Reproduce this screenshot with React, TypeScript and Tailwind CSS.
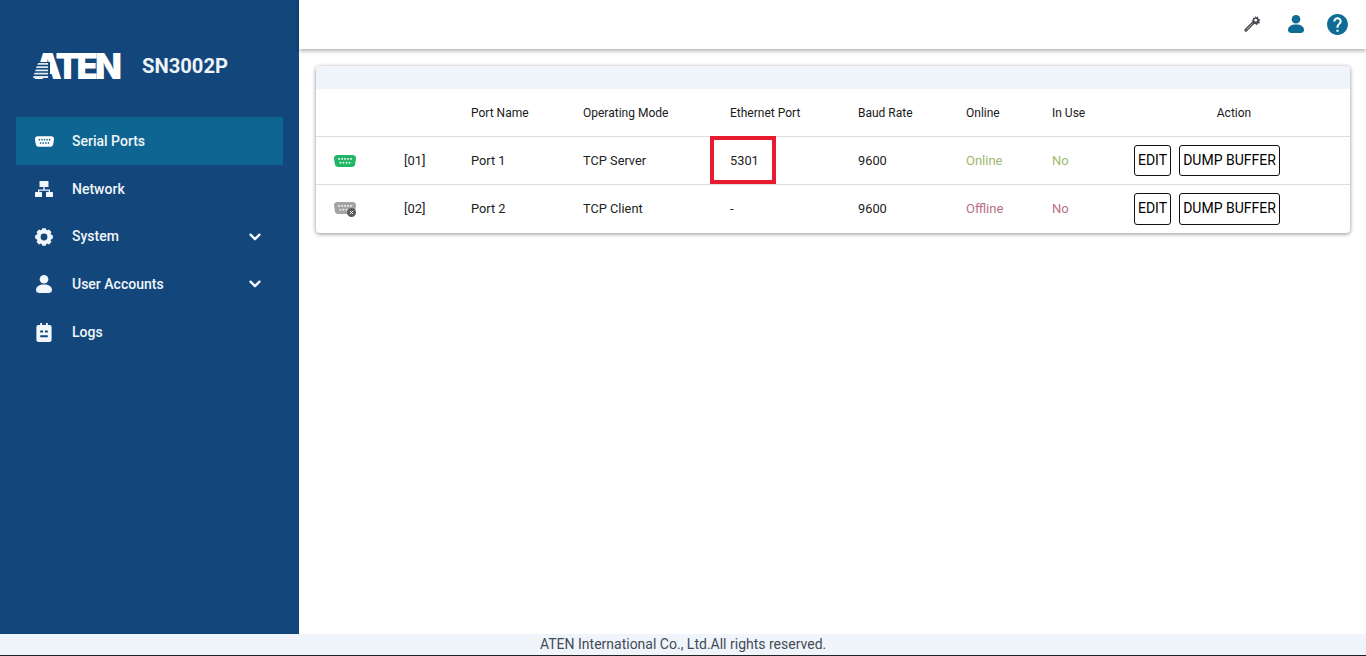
import React from "react";
import { MdHelp } from "react-icons/md";

function SerialIcon({ body, dot, className }: { body: string; dot: string; className?: string }) {
  const top = [5.500, 8.800, 12, 15.200, 18.500];
  const bottom = [7, 10.300, 13.700, 17];
  return (
    <svg viewBox="0 0 24 13" className={className}>
      <path d="M3.500 0h17C22.600 0 24 1.500 24 3.300c0 .4 0 .8-.1 1.200l-.9 5.500c-.3 1.800-1.700 3-3.400 3H4.400c-1.700 0-3.100-1.200-3.400-3L.1 4.500C0 4.100 0 3.700 0 3.300 0 1.500 1.400 0 3.500 0z" fill={body} />
      {top.map((x) => <rect key={x} x={x - 0.9} y={3.200} width={1.800} height={2} fill={dot} />)}
      {bottom.map((x) => <rect key={x} x={x - 0.9} y={7.400} width={1.800} height={2} fill={dot} />)}
    </svg>
  );
}

function NetworkIcon({ className }: { className?: string }) {
  return (
    <svg viewBox="0 0 18 16" className={className} fill="currentColor">
      <rect x="4.500" y="0" width="9" height="6" rx="0.600" />
      <path d="M8.300 6h1.400v2.500H15v3h-1.300V9.800H4.300v1.700H3v-3h5.300z" />
      <rect x="0" y="11" width="7" height="5" rx="0.600" />
      <rect x="11" y="11" width="7" height="5" rx="0.600" />
    </svg>
  );
}

function GearIcon({ className }: { className?: string }) {
  const teeth = [0, 45, 90, 135, 180, 225, 270, 315];
  return (
    <svg viewBox="0 0 20 20" className={className}>
      {teeth.map((a) => (
        <rect key={a} x="7.600" y="0.200" width="4.800" height="4" rx="1.200" fill="currentColor" transform={`rotate(${a} 10 10)`} />
      ))}
      <circle cx="10" cy="10" r="6" fill="none" stroke="currentColor" strokeWidth="4.400" />
    </svg>
  );
}

function UserIcon({ className }: { className?: string }) {
  return (
    <svg viewBox="0 0 16 18" className={className} fill="currentColor">
      <circle cx="8" cy="4.300" r="4.300" />
      <path d="M0 15c0-3.600 3.400-5.500 8-5.500s8 1.900 8 5.500c0 2-1.500 3-3.200 3H3.200C1.500 18 0 17 0 15z" />
    </svg>
  );
}

function ChevronIcon({ className }: { className?: string }) {
  return (
    <svg viewBox="0 0 14 9" className={className} fill="none" stroke="currentColor" strokeWidth="2.800" strokeLinecap="round" strokeLinejoin="round">
      <path d="M1.800 1.800L7 7l5.200-5.200" />
    </svg>
  );
}

function LogsIcon({ className }: { className?: string }) {
  return (
    <svg viewBox="0 0 16 20" className={className}>
      <path fillRule="evenodd" fill="currentColor" d="M2 2h2V0h2v2h4V0h2v2h2c1.100 0 2 .9 2 2v14c0 1.100-.9 2-2 2H2c-1.100 0-2-.9-2-2V4c0-1.100.9-2 2-2zm2 6v2h3V8H4zm5 0v2h3V8H9zm-5 5v2h8v-2H4z" />
    </svg>
  );
}

function WandIcon({ className }: { className?: string }) {
  return (
    <svg viewBox="0 0 18 18" className={className}>
      <path d="M2 16L9.500 8.500" stroke="#4a4e52" strokeWidth="3.200" strokeLinecap="round" />
      <path d="M2.500 15.500L9 9" stroke="#c9ccce" strokeWidth="0.800" />
      <path d="M11.500 0.500l1.200 1.900 2.200-.7.300 2.300 2.200.9-1.300 1.800.9 2-2.300.3-1 1.900-1.600-1.500-2.200.4-.2-2.300-1.900-1.100 1.700-1.500-.2-2.300 2.200.5z" fill="#4a4e52" />
      <circle cx="12.400" cy="5.500" r="1.400" fill="#ffffff" />
    </svg>
  );
}

function AtenLogo() {
  return (
    <div className="relative h-[27px] w-[88px]">
      <span className="absolute left-[1px] top-[-2.500px] font-['Inter',sans-serif] text-[35px] font-black leading-[33px] tracking-[-3px] text-white">ATEN</span>
      <svg viewBox="0 0 18 17" className="absolute left-0 top-[10px] h-[16px] w-[17px]">
        <path d="M6 0h12v17H0z" fill="#13467a" />
        <path d="M5.500 1H16v1.800H4.600zM4 4.500h12v1.800H3.100zM2.900 8H16v1.800H2.100zM1.700 11.500H16v1.800H.9zM.6 15H16v2H0z" fill="#dfe9f2" />
      </svg>
    </div>
  );
}

const nav = [
  { label: "Serial Ports", h: "h-[48px]", active: true, icon: <SerialIcon body="#ffffff" dot="#0f6591" className="h-[11px] w-[19px]" /> },
  { label: "Network", h: "h-[48px]", icon: <NetworkIcon className="h-[16px] w-[18px]" /> },
  { label: "System", h: "h-[47.500px]", chevron: true, icon: <GearIcon className="h-[18px] w-[18px]" /> },
  { label: "User Accounts", h: "h-[47.800px]", chevron: true, icon: <UserIcon className="h-[18px] w-[16px]" /> },
  { label: "Logs", h: "h-[47.800px]", icon: <LogsIcon className="h-[19px] w-[16px]" /> },
];

const rows = [
  { icon: "green", id: "[01]", name: "Port 1", mode: "TCP Server", eth: "5301", baud: "9600", online: "Online", use: "No", color: "text-[#9db96f]", useColor: "text-[#a3bb6f]", btn: "h-[31px] pt-[1px]", pad: "pt-[1px]", h: "h-[48px] border-b border-[#dedede]" },
  { icon: "gray", id: "[02]", name: "Port 2", mode: "TCP Client", eth: "-", baud: "9600", online: "Offline", use: "No", color: "text-[#b96f84]", useColor: "text-[#b96f84]", btn: "h-[32px]", pad: "pb-[1px]", h: "h-[49px]" },
];

export default function App() {
  return (
    <div className="flex h-[656px] w-[1366px] flex-col overflow-hidden bg-white font-['Roboto',sans-serif]">
      <div className="flex min-h-0 flex-1">
        <aside className="w-[299px] shrink-0 bg-[#13467a] text-[#f0f6fb]">
          <div className="flex h-[117px] items-start pl-[33px] pt-[52px]">
            <AtenLogo />
            <span className="ml-[21px] mt-[1px] text-[20.200px] font-bold leading-[27px] text-[#eef4fa]">SN3002P</span>
          </div>
          <nav className="flex flex-col pl-[16px] pr-[16px]">
            {nav.map((n) => (
              <div key={n.label} className={`flex items-center ${n.h} ${n.active ? "bg-[#0f6591]" : ""}`}>
                <span className="flex w-[56px] shrink-0 justify-center">{n.icon}</span>
                <span className="flex-1 text-[14px] font-medium">{n.label}</span>
                {n.chevron && <ChevronIcon className="mr-[22px] h-[8px] w-[12px]" />}
              </div>
            ))}
          </nav>
        </aside>
        <div className="flex min-w-0 flex-1 flex-col">
          <header className="flex h-[49px] shrink-0 items-center justify-end shadow-[0_2px_4px_rgba(0,0,0,0.3)]">
            <WandIcon className="mb-[2px] mr-[27px] h-[17px] w-[17px]" />
            <UserIcon className="mb-[2px] mr-[21px] h-[18px] w-[16px] text-[#0f6c96]" />
            <MdHelp className="mb-[1px] mr-[16px] h-[25px] w-[25px] text-[#0f6c96]" />
          </header>
          <main className="pl-[17px] pr-[16px] pt-[17px]">
            <div className="overflow-hidden rounded-[4px] bg-white shadow-[0_1px_4px_rgba(0,0,0,0.45)]">
              <div className="h-[23px] bg-[#f0f5fb]" />
              <table className="w-full table-fixed border-collapse text-left text-[12.800px] text-[#222]">
                <thead>
                  <tr className="h-[47px] border-b border-[#dedede] text-[12px] text-[#1a1a1a]">
                    <th className="w-[72px] font-normal"></th>
                    <th className="w-[67px] font-normal"></th>
                    <th className="w-[112px] pl-[16px] pt-[1px] font-normal">Port Name</th>
                    <th className="w-[147px] pl-[16px] pt-[1px] font-normal">Operating Mode</th>
                    <th className="w-[128px] pl-[16px] pt-[1px] font-normal">Ethernet Port</th>
                    <th className="w-[108px] pl-[16px] pt-[1px] font-normal">Baud Rate</th>
                    <th className="w-[86px] pl-[16px] pt-[1px] font-normal">Online</th>
                    <th className="w-[82px] pl-[16px] pt-[1px] font-normal">In Use</th>
                    <th className="pt-[1px] text-center font-normal">Action</th>
                  </tr>
                </thead>
                <tbody>
                  {rows.map((r, i) => (
                    <tr key={r.id} className={r.h}>
                      <td className={`pl-[18px] ${r.pad}`}>
                        {r.icon === "green" ? (
                          <SerialIcon body="#21b566" dot="#e6f7ec" className="h-[12px] w-[22px]" />
                        ) : (
                          <div className="relative h-[12px] w-[22px]">
                            <SerialIcon body="#a3a3a3" dot="#efefef" className="h-[12px] w-[22px]" />
                            <svg viewBox="0 0 10 10" className="absolute right-[0px] top-[6px] h-[9px] w-[9px]">
                              <circle cx="5" cy="5" r="5" fill="#5a5a5a" />
                              <path d="M3.200 3.200l3.600 3.600M6.800 3.200l-3.600 3.600" stroke="#ffffff" strokeWidth="1" />
                            </svg>
                          </div>
                        )}
                      </td>
                      <td className={`pl-[16px] text-[13px] ${r.pad}`}>{r.id}</td>
                      <td className={`pl-[16px] ${r.pad}`}>{r.name}</td>
                      <td className={`pl-[16px] ${r.pad}`}>{r.mode}</td>
                      <td className={`relative pl-[16px] ${r.pad}`}>
                        {r.eth}
                        {i === 0 && <span className="absolute bottom-[0px] left-[-4px] top-[-1px] w-[66px] border-[4.500px] border-[#e81c2e]" />}
                      </td>
                      <td className={`pl-[16px] ${r.pad}`}>{r.baud}</td>
                      <td className={`pl-[16px] text-[13px] ${r.pad} ${r.color}`}>{r.online}</td>
                      <td className={`pl-[16px] text-[13px] ${r.pad} ${r.useColor}`}>{r.use}</td>
                      <td className="pl-[16px]">
                        <div className="flex items-center gap-[8px] text-[14px] text-black">
                          <button className={`flex w-[37px] items-center justify-center rounded-[3px] border border-[#111] ${r.btn}`}>EDIT</button>
                          <button className={`flex w-[101px] items-center justify-center rounded-[3px] border border-[#111] ${r.btn}`}>DUMP BUFFER</button>
                        </div>
                      </td>
                    </tr>
                  ))}
                </tbody>
              </table>
            </div>
          </main>
        </div>
      </div>
      <footer className="h-[22px] shrink-0 border-b border-[#222] bg-[#f0f5fb] pl-[540px] text-[14px] leading-[21px] text-[#444b55]">
        ATEN International Co., Ltd.All rights reserved.
      </footer>
    </div>
  );
}
